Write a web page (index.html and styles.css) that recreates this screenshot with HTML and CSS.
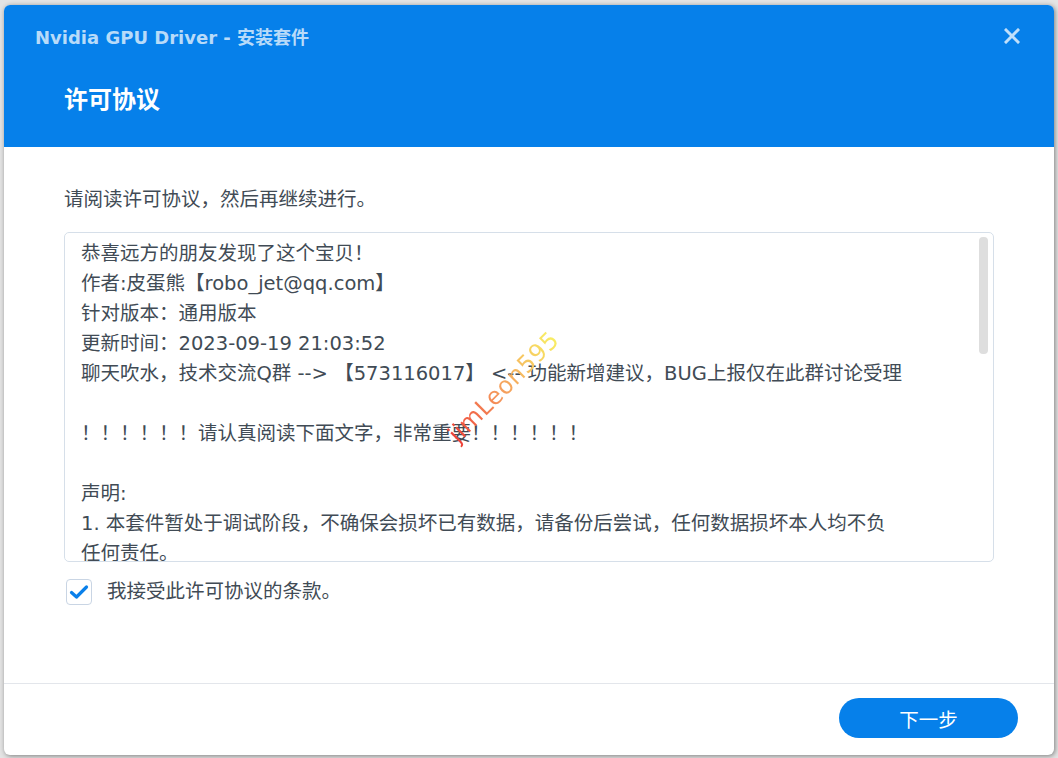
FILE: index.html
```html
<!DOCTYPE html>
<html lang="zh-CN">
<head>
    <meta charset="UTF-8">
    <meta name="viewport" content="width=device-width, initial-scale=1.0">
    <title>Nvidia GPU Driver - 安装套件</title>
    <link rel="stylesheet" href="styles.css">
</head>
<body>
    <div class="dialog">
        <div class="dialog-header">
            <div class="title-row">
                <span class="window-title">Nvidia GPU Driver - 安装套件</span>
                <svg class="close-icon" width="16" height="16" viewBox="0 0 16 16">
                    <path d="M2 2 L14 14 M14 2 L2 14" stroke="currentColor" stroke-width="3" stroke-linecap="square" fill="none"/>
                </svg>
            </div>
            <h2 class="step-title">许可协议</h2>
        </div>

        <div class="dialog-body">
            <p class="intro">请阅读许可协议，然后再继续进行。</p>
            <div class="license-box">
                <div class="license-text">
                    <div>恭喜远方的朋友发现了这个宝贝！</div>
                    <div>作者:皮蛋熊【robo_jet@qq.com】</div>
                    <div>针对版本：通用版本</div>
                    <div>更新时间：2023-09-19 21:03:52</div>
                    <div>聊天吹水，技术交流Q群 --&gt; 【573116017】 &lt;-- 功能新增建议，BUG上报仅在此群讨论受理</div>
                    <div>&nbsp;</div>
                    <div>！！！！！！请认真阅读下面文字，非常重要！！！！！！</div>
                    <div>&nbsp;</div>
                    <div>声明:</div>
                    <div>1. 本套件暂处于调试阶段，不确保会损坏已有数据，请备份后尝试，任何数据损坏本人均不负</div>
                    <div>任何责任。</div>
                </div>
                <div class="scroll-thumb"></div>
                <span class="watermark">jimLeon595</span>
            </div>
            <label class="agree">
                <span class="checkbox">
                    <svg width="20" height="16" viewBox="0 0 20 16">
                        <path d="M2.5 8.5 L7.5 13 L17.5 3" stroke="#0a80ea" stroke-width="3.2" stroke-linecap="round" stroke-linejoin="round" fill="none"/>
                    </svg>
                </span>
                <span>我接受此许可协议的条款。</span>
            </label>
        </div>

        <div class="dialog-footer">
            <button class="btn" type="button">下一步</button>
        </div>
    </div>
</body>
</html>
```

FILE: styles.css
```css
html, body {
    margin: 0;
    background-color: #e4e4e4;
}

body {
    padding: 5px 4px 3px 4px;
    font-family: 'DejaVu Sans', 'Noto Sans CJK SC', sans-serif;
    color: #414b55;
}

.dialog {
    width: 1050px;
    height: 750px;
    display: flex;
    flex-direction: column;
    background-color: white;
    border-radius: 6px;
    overflow: hidden;
    box-shadow: 1px 1px 5px rgba(0, 0, 0, 0.45);
}

.dialog-header {
    height: 142px;
    box-sizing: border-box;
    padding: 19px 34px 0 31px;
    background-color: #0680ea;
}

.title-row {
    display: flex;
    justify-content: space-between;
    align-items: center;
    height: 24px;
}

.window-title {
    font-size: 18px;
    font-weight: bold;
    color: rgba(255, 255, 255, 0.72);
}

.close-icon {
    color: rgba(255, 255, 255, 0.75);
}

.step-title {
    margin: 36px 0 0 29px;
    font-size: 24px;
    line-height: 32px;
    font-weight: bold;
    color: white;
}

.dialog-body {
    flex: 1;
    padding: 38px 60px 0 60px;
    font-size: 19.5px;
}

.intro {
    margin: 0;
    line-height: 29px;
}

.license-box {
    position: relative;
    margin-top: 18px;
    height: 330px;
    box-sizing: border-box;
    border: 1px solid #d6dfe9;
    border-radius: 5px;
    overflow: hidden;
}

.license-text {
    padding: 6px 16px 0 16px;
    line-height: 30px;
    white-space: nowrap;
}

.scroll-thumb {
    position: absolute;
    top: 4px;
    right: 5px;
    width: 9px;
    height: 117px;
    border-radius: 4px;
    background-color: #dedede;
}

.watermark {
    position: absolute;
    left: 366px;
    top: 140px;
    font-size: 24px;
    letter-spacing: 0.5px;
    transform: rotate(-45deg);
    background: linear-gradient(90deg, #ee3f38, #f59a5c 45%, #f8f064);
    -webkit-background-clip: text;
    background-clip: text;
    color: transparent;
}

.agree {
    display: flex;
    align-items: center;
    gap: 15px;
    margin-top: 17px;
    margin-left: 2px;
    line-height: 26px;
}

.checkbox {
    width: 24px;
    height: 24px;
    display: flex;
    align-items: center;
    justify-content: center;
    border: 1px solid #c9d5e4;
    border-radius: 4px;
}

.dialog-footer {
    height: 72px;
    box-sizing: border-box;
    padding: 14px 36px 0 0;
    border-top: 1px solid #e3e6eb;
    display: flex;
    justify-content: flex-end;
    align-items: flex-start;
}

.btn {
    width: 179px;
    height: 40px;
    border: none;
    border-radius: 20px;
    background-color: #0680ea;
    color: white;
    font-family: 'DejaVu Sans', 'Noto Sans CJK SC', sans-serif;
    font-size: 19.5px;
    cursor: pointer;
}
```
